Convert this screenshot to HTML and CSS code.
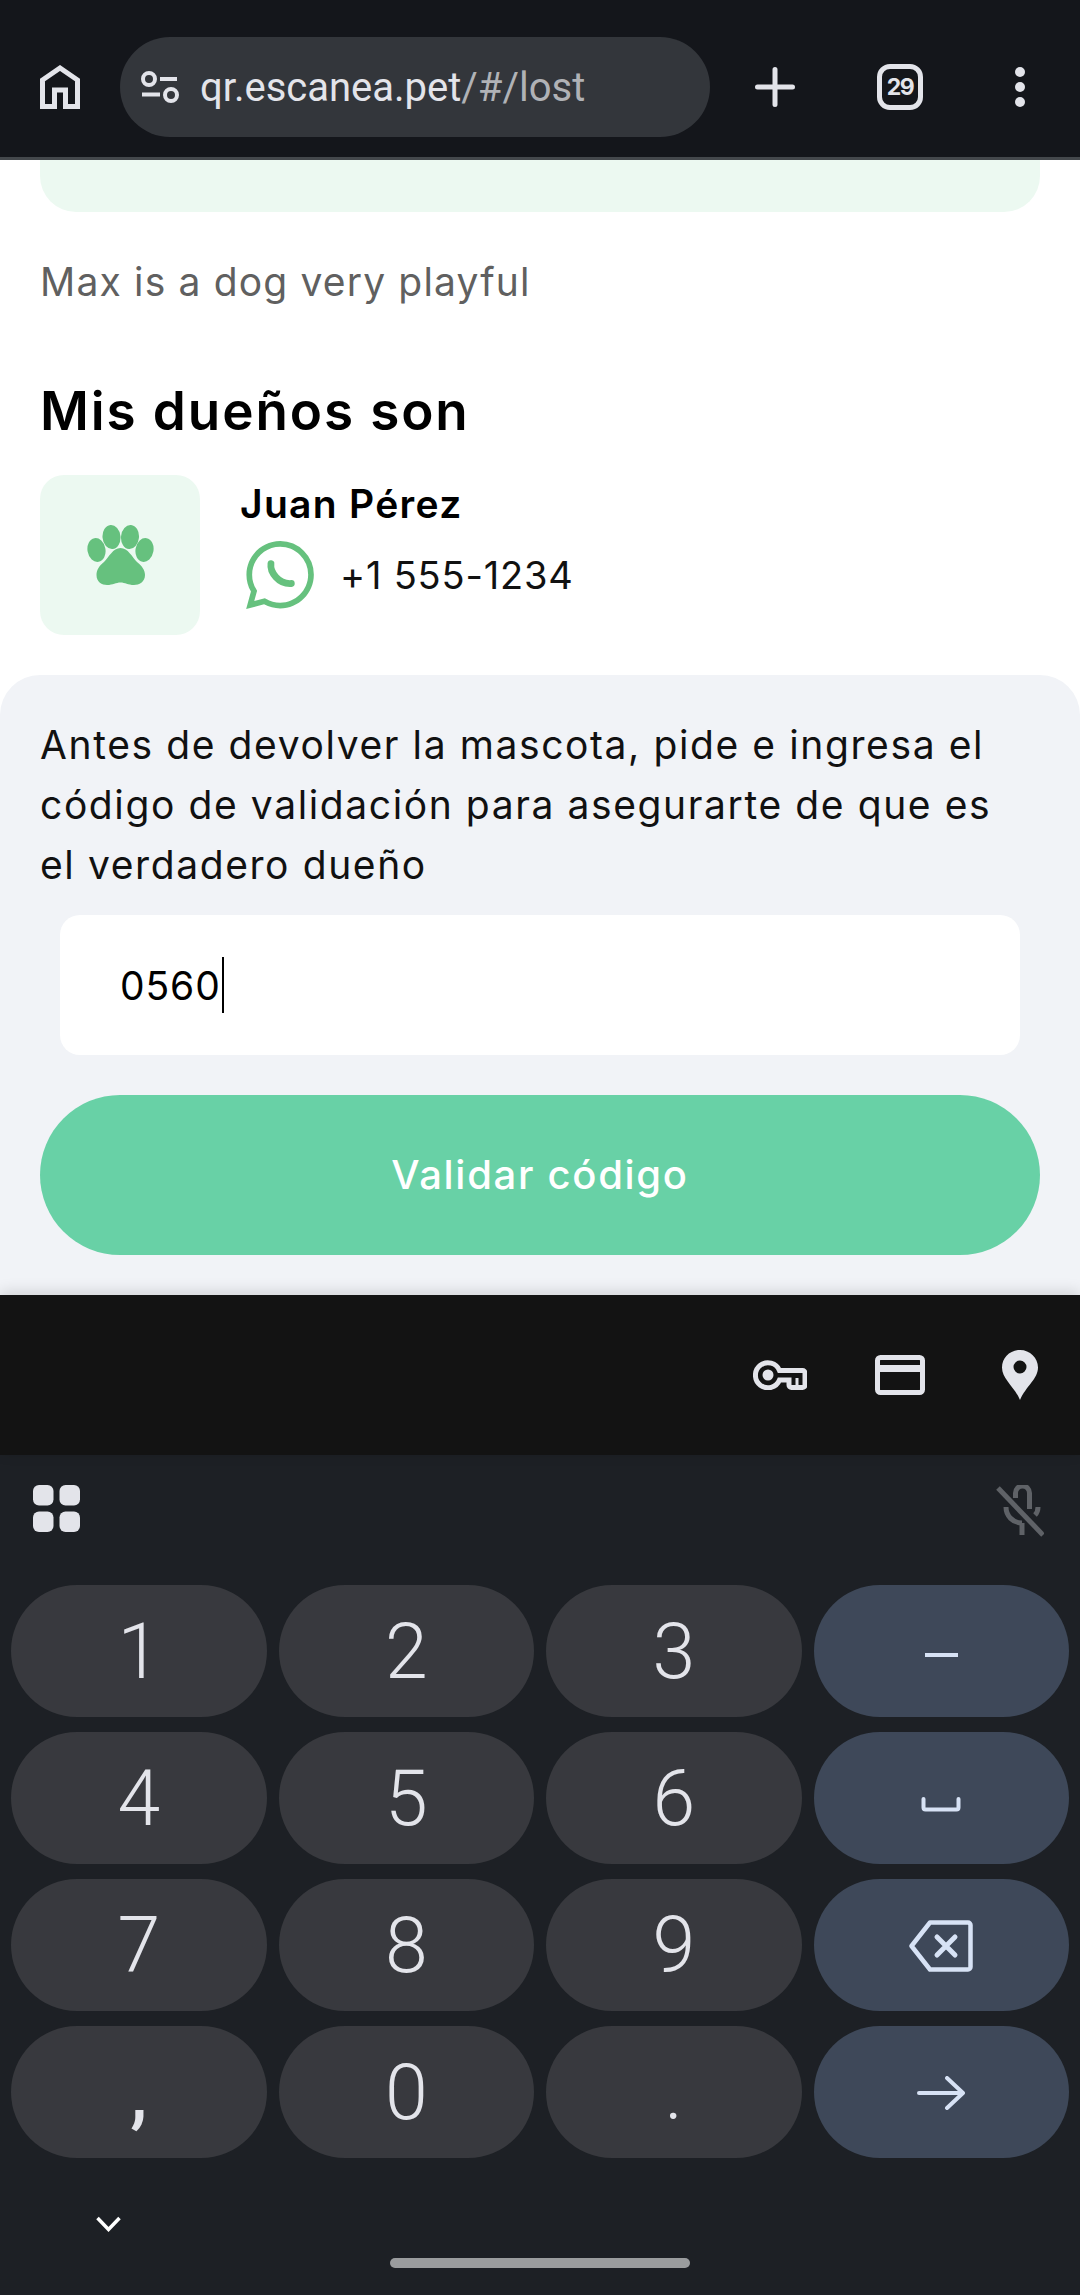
FILE: index.html
```html
<!DOCTYPE html>
<html lang="es">
<head>
    <meta charset="UTF-8">
    <meta name="viewport" content="width=device-width, initial-scale=1.0">
    <title>Mascota perdida</title>
    <link rel="stylesheet" href="styles.css">
</head>
<body>
    <div class="screen">
        <header class="toolbar">
            <svg class="home-icon" width="40" height="44" viewBox="0 0 40 44"><path d="M2.500 41.500V15L20 3l17.500 12v26.500H25.500V25h-11v16.500z" fill="none" stroke="#e3e4ea" stroke-width="5"/></svg>
            <div class="url-bar">
                <svg class="tune-icon" width="40" height="34" viewBox="0 0 40 34"><g fill="none" stroke="#e3e4ea" stroke-width="4"><circle cx="9" cy="9" r="6"/><circle cx="31" cy="25" r="6"/><path d="M20 9h17M2 24.500h18"/></g></svg>
                <span class="url-host">qr.escanea.pet</span><span class="url-path">/#/lost</span>
            </div>
            <svg class="plus-icon" width="40" height="40" viewBox="0 0 40 40"><path d="M2.500 20h35M20 2.500v35" stroke="#e3e4ea" stroke-width="5" stroke-linecap="round"/></svg>
            <div class="tab-count">29</div>
            <svg class="dots-icon" width="10" height="40" viewBox="0 0 10 40"><circle cx="5" cy="5" r="5" fill="#e3e4ea"/><circle cx="5" cy="20" r="5" fill="#e3e4ea"/><circle cx="5" cy="35" r="5" fill="#e3e4ea"/></svg>
        </header>

        <main class="page">
            <div class="green-strip"></div>
            <p class="pet-text">Max is a dog very playful</p>
            <h2 class="owners-title">Mis dueños son</h2>
            <div class="owner">
                <div class="owner-pic">
                    <svg width="67" height="60" viewBox="0 0 67 60" fill="#66c17e">
                        <ellipse cx="9.500" cy="25" rx="9" ry="12" transform="rotate(-10 9.500 25)"/>
                        <ellipse cx="24.500" cy="12" rx="9" ry="12" transform="rotate(-5 24.500 12)"/>
                        <ellipse cx="43" cy="12" rx="9" ry="12" transform="rotate(5 43 12)"/>
                        <ellipse cx="57.500" cy="25" rx="9" ry="12" transform="rotate(10 57.500 25)"/>
                        <path d="M33.500 23C26 23 22 32 17 37c-5 4-7.500 8-7.500 13 0 7 5.500 10 10.500 10 6 0 9-2.500 13.500-2.500S41 60 47 60c5 0 11-3 11-10 0-5-3-9-8-13-5-5-9-14-16.500-14z"/>
                    </svg>
                </div>
                <div class="owner-info">
                    <div class="owner-name">Juan Pérez</div>
                    <div class="owner-phone">
                        <svg width="68" height="68" viewBox="0 0 24 24"><path d="M12.050 21.785h-.004a9.870 9.870 0 01-5.031-1.378l-.361-.214-3.741.982.998-3.648-.235-.374a9.860 9.860 0 01-1.510-5.260c.001-5.450 4.436-9.884 9.888-9.884 2.640 0 5.122 1.030 6.988 2.898a9.825 9.825 0 012.893 6.994c-.003 5.450-4.437 9.884-9.885 9.884m8.413-18.297A11.815 11.815 0 0012.050 0C5.495 0 .160 5.335.157 11.892c0 2.096.547 4.142 1.588 5.945L.057 24l6.305-1.654a11.882 11.882 0 005.683 1.448h.005c6.554 0 11.890-5.335 11.893-11.893a11.821 11.821 0 00-3.480-8.413Z" fill="#66c17e"/><path d="M8.800 8C8.400 11 11.500 15.300 16 15" fill="none" stroke="#66c17e" stroke-width="2.400" stroke-linecap="round"/></svg>
                        <span>+1 555-1234</span>
                    </div>
                </div>
            </div>

            <section class="validate">
                <p class="validate-text">Antes de devolver la mascota, pide e ingresa el<br>código de validación para asegurarte de que es<br>el verdadero dueño</p>
                <div class="code-input">0560<span class="caret"></span></div>
                <button class="validate-btn">Validar código</button>
            </section>
        </main>

        <div class="autofill">
            <div class="autofill-item">
                <svg width="54" height="30" viewBox="0 0 54 30"><g fill="none" stroke="#e3e4ea"><path d="M26.500 10.500a12.500 12.500 0 1 0 0 9.500H36v5a2.500 2.500 0 0 0 2.500 2.500h11a2.500 2.500 0 0 0 2.500-2.500V13a2.500 2.500 0 0 0-2.500-2.500z" stroke-width="5"/><path d="M44 18v8" stroke-width="3"/></g><circle cx="15" cy="15" r="5.500" fill="#e3e4ea"/></svg>
            </div>
            <div class="autofill-item">
                <svg width="50" height="40" viewBox="0 0 50 40"><rect x="2.500" y="2.500" width="45" height="35" rx="3" fill="none" stroke="#e3e4ea" stroke-width="5"/><rect x="2" y="10" width="46" height="7" fill="#e3e4ea"/></svg>
            </div>
            <div class="autofill-item">
                <svg width="36" height="50" viewBox="0 0 36 50"><path fill-rule="evenodd" d="M18 0C8 0 0 8 0 17.500 0 29 12 36 18 50c6-14 18-21 18-32.500C36 8 28 0 18 0zm0 10.500a6.500 6.500 0 1 1 0 13 6.500 6.500 0 0 1 0-13z" fill="#e3e4ea"/></svg>
            </div>
        </div>

        <div class="keyboard">
            <div class="kb-top">
                <svg width="47" height="47" viewBox="0 0 47 47" fill="#e3e4ea"><rect width="20.500" height="20.500" rx="6"/><rect x="26.500" width="20.500" height="20.500" rx="6"/><rect y="26.500" width="20.500" height="20.500" rx="6"/><rect x="26.500" y="26.500" width="20.500" height="20.500" rx="6"/></svg>
                <svg width="48" height="52" viewBox="0 0 48 52"><g fill="none" stroke="#5f6267" stroke-width="5"><path d="M19.500 13V8a7 7 0 0 1 14 0v16"/><path d="M10 22c0 9 7 16 16 16M42 22c0 3-1 6-3 8"/><path d="M26 38v12"/><path d="M2 3l45 47"/></g></svg>
            </div>
            <div class="keys">
                <div class="key">1</div>
                <div class="key">2</div>
                <div class="key">3</div>
                <div class="key key-fn"><svg width="33" height="4" viewBox="0 0 33 4" class="minus-icon"><rect width="33" height="4" fill="#d7e2f5"/></svg></div>
                <div class="key">4</div>
                <div class="key">5</div>
                <div class="key">6</div>
                <div class="key key-fn"><svg width="40" height="15" viewBox="0 0 40 15" class="space-icon"><path d="M2.500 2v8.500a2 2 0 0 0 2 2h31a2 2 0 0 0 2-2V2" fill="none" stroke="#d7e2f5" stroke-width="4" stroke-linecap="round"/></svg></div>
                <div class="key">7</div>
                <div class="key">8</div>
                <div class="key">9</div>
                <div class="key key-fn"><svg width="64" height="52" viewBox="0 0 64 52"><g fill="none" stroke="#d7e2f5" stroke-width="4.500" stroke-linejoin="round" stroke-linecap="round"><path d="M21 2.500h38a2.500 2.500 0 0 1 2.500 2.500v42a2.500 2.500 0 0 1-2.500 2.500H21L2.500 26z"/><path d="M28 17l18 18M46 17L28 35" stroke-width="5"/></g></svg></div>
                <div class="key key-comma">,</div>
                <div class="key">0</div>
                <div class="key">.</div>
                <div class="key key-fn"><svg width="48" height="34" viewBox="0 0 48 34"><path d="M2 17h44M30 2l16 15-16 15" fill="none" stroke="#d7e2f5" stroke-width="4" stroke-linecap="round" stroke-linejoin="round"/></svg></div>
            </div>
            <div class="kb-bottom">
                <svg class="chevron" width="25" height="16" viewBox="0 0 25 16"><path d="M1.500 2l11 11.500L23.500 2" fill="none" stroke="#fff" stroke-width="3.500"/></svg>
                <div class="home-pill"></div>
            </div>
        </div>
    </div>
</body>
</html>
```

FILE: styles.css
```css
* {
    box-sizing: border-box;
}
body {
    margin: 0;
    background: #fff;
    font-family: Inter, "Open Sans", sans-serif;
}
.screen {
    width: 1080px;
    height: 2295px;
    overflow: hidden;
    display: flex;
    flex-direction: column;
}

/* browser bar */
.toolbar {
    height: 160px;
    flex-shrink: 0;
    background: #14161b;
    border-bottom: 3px solid #44484c;
    display: flex;
    align-items: flex-start;
}
.home-icon {
    margin: 65px 0 0 40px;
}
.url-bar {
    width: 590px;
    height: 100px;
    margin: 37px 0 0 40px;
    padding-left: 20px;
    background: #33363b;
    border-radius: 50px;
    display: flex;
    align-items: center;
    font-family: Roboto, sans-serif;
    font-size: 40px;
    color: #e3e4ea;
    white-space: nowrap;
}
.tune-icon {
    margin-right: 20px;
}
.url-path {
    color: #b0b2b6;
}
.plus-icon {
    margin: 67px 0 0 45px;
}
.tab-count {
    width: 46px;
    height: 46px;
    margin: 64px 0 0 82px;
    border: 5px solid #e3e4ea;
    border-radius: 13px;
    display: flex;
    align-items: center;
    justify-content: center;
    font-size: 23px;
    font-weight: 700;
    letter-spacing: -1.5px;
    color: #e3e4ea;
}
.dots-icon {
    margin: 67px 0 0 92px;
}

/* page */
.page {
    height: 1135px;
    flex-shrink: 0;
    background: #fff;
}
.green-strip {
    height: 52px;
    margin: 0 40px;
    background: #ecf9f1;
    border-radius: 0 0 36px 36px;
}
.pet-text {
    margin: 40px 40px 0;
    font-size: 39px;
    letter-spacing: 1.16px;
    line-height: 60px;
    color: #606060;
}
.owners-title {
    margin: 64px 40px 0;
    font-size: 53px;
    letter-spacing: 1.9px;
    line-height: 70px;
    font-weight: 600;
    color: #000;
}
.owner {
    margin: 29px 40px 0;
    display: flex;
    gap: 40px;
}
.owner-pic {
    width: 160px;
    height: 160px;
    background: #ecf9f1;
    border-radius: 24px;
    display: flex;
    align-items: center;
    justify-content: center;
}
.owner-name {
    font-size: 39px;
    letter-spacing: 1.3px;
    line-height: 58px;
    font-weight: 600;
    color: #000;
}
.owner-phone {
    margin: 8px 0 0 6px;
    display: flex;
    align-items: center;
    gap: 26px;
    font-size: 38px;
    letter-spacing: 0.8px;
    color: #111;
}

/* validation block */
.validate {
    height: 620px;
    margin-top: 40px;
    padding: 40px 40px 0;
    background: #f1f3f7;
    border-radius: 40px 40px 0 0;
}
.validate-text {
    margin: 0;
    font-size: 39px;
    letter-spacing: 1.6px;
    line-height: 60px;
    color: #111;
    white-space: nowrap;
}
.code-input {
    height: 140px;
    margin: 20px 20px 0;
    padding-left: 60px;
    background: #fff;
    border-radius: 20px;
    display: flex;
    align-items: center;
    font-size: 39px;
    letter-spacing: 0.9px;
    color: #000;
}
.caret {
    width: 2px;
    height: 56px;
    margin-left: 1px;
    background: #000;
}
.validate-btn {
    display: block;
    width: 100%;
    height: 160px;
    margin-top: 40px;
    padding-bottom: 3px;
    border: none;
    border-radius: 80px;
    background: #68d1a6;
    color: #fff;
    font-family: inherit;
    font-size: 40px;
    letter-spacing: 1.7px;
    font-weight: 500;
}

/* keyboard */
.autofill {
    height: 160px;
    flex-shrink: 0;
    position: relative;
    background: #131313;
    box-shadow: 0 -3px 14px rgba(0, 0, 0, 0.14);
    display: flex;
    justify-content: flex-end;
}
.autofill-item {
    width: 120px;
    display: flex;
    align-items: center;
    justify-content: center;
}
.keyboard {
    flex: 1;
    background: #1d2025;
}
.kb-top {
    height: 130px;
    padding: 30px 36px 0 33px;
    display: flex;
    justify-content: space-between;
    align-items: flex-start;
}
.keys {
    padding: 0 11px;
    display: grid;
    grid-template-columns: repeat(4, 1fr);
    grid-auto-rows: 132px;
    gap: 15px 12px;
}
.key {
    background: #38393e;
    border-radius: 66px;
    padding-top: 2px;
    display: flex;
    align-items: center;
    justify-content: center;
    font-family: Roboto, sans-serif;
    font-size: 77px;
    font-weight: 350;
    color: #e3e4ea;
}
.key-fn {
    background: #3e4859;
}
.key-comma {
    font-weight: 500;
}
.minus-icon {
    margin-top: 6px;
}
.space-icon {
    margin-top: 10px;
}
.kb-bottom {
    padding-left: 96px;
    display: flex;
    align-items: flex-start;
}
.chevron {
    margin-top: 58px;
}
.home-pill {
    width: 300px;
    height: 10px;
    margin: 100px 0 0 269px;
    background: #9a9c9e;
    border-radius: 5px;
}
```
